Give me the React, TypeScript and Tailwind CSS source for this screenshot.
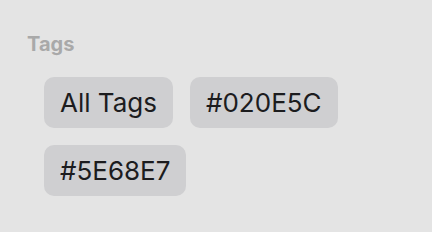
const tags = ['All Tags', '#020E5C', '#5E68E7'];

export default function App() {
  return (
    <div className="w-[432px] h-[232px] bg-[#e4e4e4] pl-[27px] pt-[32px] font-['Inter',sans-serif]">
      <div className="text-[20px] leading-[24px] font-bold text-[#a9a9a9]">Tags</div>
      <div className="mt-[21px] pl-[17px] flex flex-wrap gap-[17px] w-[400px]">
        {tags.map((t) => (
          <div
            key={t}
            className="h-[51px] px-[16px] flex items-center rounded-[10px] bg-[#cfcfd1] text-[26px] text-[#1c1c1e]"
          >
            {t}
          </div>
        ))}
      </div>
    </div>
  );
}
